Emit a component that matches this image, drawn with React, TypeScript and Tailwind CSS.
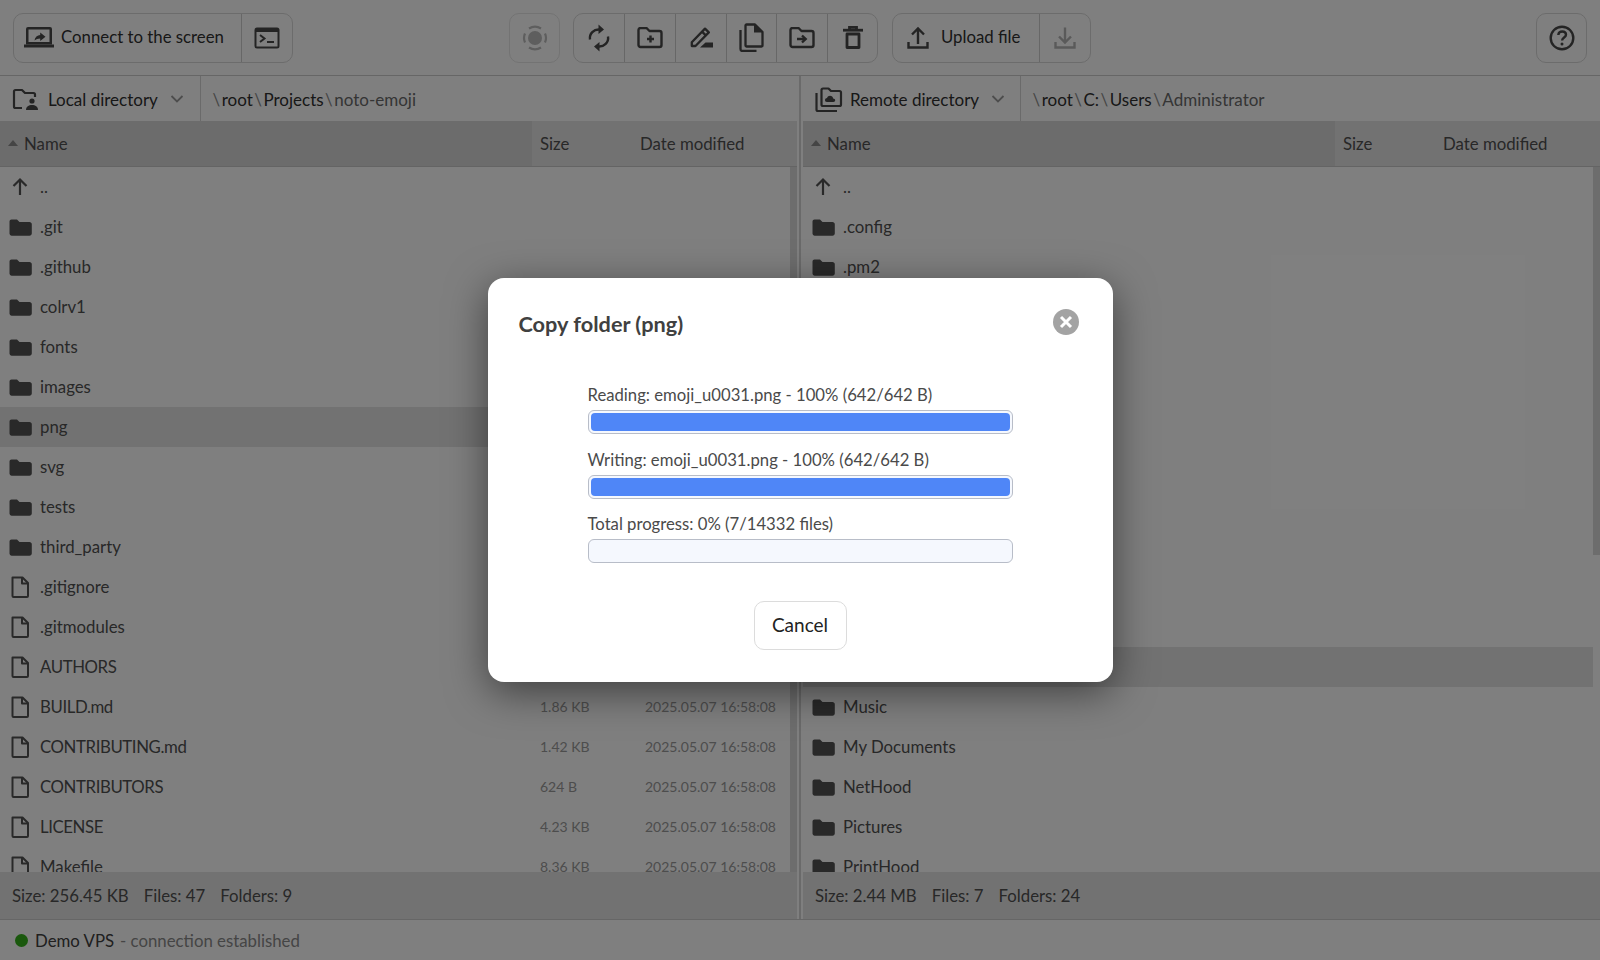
import React from "react";

const font = "font-['Lato','Noto_Sans',sans-serif]";

const FolderIcon = () => (
  <svg width="23" height="17" viewBox="0 0 23 17" fill="currentColor" className="shrink-0">
    <path d="M0.500 2.500C0.500 1.400 1.400 0.500 2.500 0.500h5.500l2.500 2.500h10C21.700 3 22.800 4 22.800 5.200v9.300c0 1.200-1 2.200-2.300 2.200H2.700C1.500 16.700 0.500 15.700 0.500 14.500z" />
  </svg>
);
const FileIcon = () => (
  <svg width="24" height="24" viewBox="0 0 24 24" fill="none" stroke="currentColor" strokeWidth="2" strokeLinejoin="round" className="shrink-0">
    <path d="M4.500 2.500h10l5.500 5.500v13a1 1 0 0 1-1 1H5.500a1 1 0 0 1-1-1z" />
    <path d="M14 2.500v6h6" />
  </svg>
);
const UpIcon = () => (
  <svg width="24" height="24" viewBox="0 0 24 24" fill="none" stroke="currentColor" strokeWidth="2.200" className="shrink-0">
    <path d="M12 20V5M5.500 11 12 4.500 18.500 11" />
  </svg>
);

const Btn = ({ children, w, border = true }: { children: React.ReactNode; w?: string; border?: boolean }) => (
  <div className={"flex h-full items-center justify-center text-[#484848] " + (w ?? "w-[51px]") + (border ? " border-r border-[#cfcfcf]" : "")}>
    {children}
  </div>
);

function Toolbar() {
  return (
    <div className="flex h-[76px] shrink-0 items-center border-b border-[#cdcdcd] bg-white px-[13px]">
      <div className="flex h-[50px] w-[280px] items-stretch rounded-[10px] border border-[#d8d8d8]">
        <div className="flex w-[228px] items-center gap-[7px] border-r border-[#cfcfcf] pl-[10px] text-[#484848]">
          <svg width="30" height="21" viewBox="0 0 30 21" fill="currentColor" className="shrink-0">
            <path fillRule="evenodd" d="M4 0h22a2 2 0 0 1 2 2v15.500H2V2a2 2 0 0 1 2-2zM4.500 2.500v12.500h21V2.500z" />
            <path d="M0 17.500h30V20.500H0z" />
            <path d="M10.500 13.500c.4-3.400 2.800-5.200 5.700-5.400V5.500l5.300 4.300-5.300 4.300v-2.600c-2.300.1-4.200.7-5.700 2z" />
          </svg>
          <span className="whitespace-nowrap pb-[2px] text-[16.800px] text-[#303030]">Connect to the screen</span>
        </div>
        <div className="flex flex-1 items-center justify-center text-[#484848]">
          <svg width="26" height="22" viewBox="0 0 26 22" className="shrink-0">
            <rect x="0.500" y="0.500" width="25" height="21" rx="2.500" fill="currentColor" />
            <rect x="2.500" y="5" width="21" height="14.500" fill="white" />
            <path d="M6 8l4.500 3.500L6 15" fill="none" stroke="currentColor" strokeWidth="2" />
            <path d="M13 15h7" stroke="currentColor" strokeWidth="2" />
          </svg>
        </div>
      </div>

      <div className="ml-[216px] flex h-[50px] w-[51px] items-center justify-center rounded-[10px] border border-[#e6e6e6] text-[#bcbcbc]">
        <svg width="26" height="26" viewBox="0 0 26 26" fill="none" stroke="currentColor" strokeWidth="2.200" className="shrink-0">
          <circle cx="13" cy="13" r="7" fill="currentColor" stroke="none" />
          <path d="M3 17.500A11 11 0 0 1 3 8.500M7 3.500a11 11 0 0 1 12 0M23 8.500a11 11 0 0 1 0 9M19 22.500a11 11 0 0 1-12 0" />
        </svg>
      </div>

      <div className="ml-[13px] flex h-[50px] w-[305px] items-stretch rounded-[10px] border border-[#d8d8d8]">
        <Btn>
          <svg width="26" height="28" viewBox="0 0 26 28" fill="none" stroke="currentColor" strokeWidth="2.400" className="shrink-0">
            <path d="M4 15.500C3 9.500 8 5 13.500 5.500" />
            <path d="M22 12.500c1 6-4 10.500-9.500 10" />
            <path d="M12.500 0.500 18 5.500l-5.500 4.500z" fill="currentColor" stroke="none" />
            <path d="M13.500 27.500 8 22.500l5.500-4.500z" fill="currentColor" stroke="none" />
          </svg>
        </Btn>
        <Btn>
          <svg width="26" height="22" viewBox="0 0 26 22" fill="none" stroke="currentColor" strokeWidth="2.400" className="shrink-0">
            <path d="M1.500 3a2 2 0 0 1 2-2h6l3 3h10a2 2 0 0 1 2 2v12a2 2 0 0 1-2 2h-19a2 2 0 0 1-2-2z" strokeLinejoin="round" />
            <path d="M13.500 8.500v7M10 12h7" />
          </svg>
        </Btn>
        <Btn>
          <svg width="23" height="21" viewBox="0 0 23 21" fill="none" stroke="currentColor" strokeWidth="2.300" className="shrink-0">
            <path d="M15 1.600 18.800 5.400 5.500 19H1.800V15.200z" strokeLinejoin="round" />
            <path d="M12 4.600l3.800 3.800" />
            <path d="M10 20.500l5.500-5H23v5z" fill="currentColor" stroke="none" />
          </svg>
        </Btn>
        <Btn w="w-[50px]">
          <svg width="25" height="29" viewBox="0 0 25 29" fill="none" stroke="currentColor" strokeWidth="2.300" strokeLinejoin="round" className="shrink-0">
            <path d="M7.500 1.500H16l7.500 7.500v13.500a1 1 0 0 1-1 1h-15a1 1 0 0 1-1-1v-20a1 1 0 0 1 1-1z" />
            <path d="M15 1v8.500h8.500z" fill="currentColor" stroke="none" />
            <path d="M1.500 7v19a2 2 0 0 0 2 2h14" />
          </svg>
        </Btn>
        <Btn>
          <svg width="26" height="22" viewBox="0 0 26 22" fill="none" stroke="currentColor" strokeWidth="2.400" className="shrink-0">
            <path d="M1.500 3a2 2 0 0 1 2-2h6l3 3h10a2 2 0 0 1 2 2v12a2 2 0 0 1-2 2h-19a2 2 0 0 1-2-2z" strokeLinejoin="round" />
            <path d="M8 12h8.500M13 8.500l3.700 3.500-3.700 3.500" />
          </svg>
        </Btn>
        <Btn border={false} w="flex-1">
          <svg width="20" height="23" viewBox="0 0 20 23" fill="none" stroke="currentColor" strokeWidth="2.800" className="shrink-0">
            <path d="M0 4.200h20" />
            <path d="M6.500 3.500V1.400h7v2.100" />
            <path d="M4 8h12v13.500H4z" strokeLinejoin="round" />
          </svg>
        </Btn>
      </div>

      <div className="ml-[14px] flex h-[50px] w-[199px] items-stretch rounded-[10px] border border-[#d8d8d8]">
        <div className="flex w-[147px] items-center gap-[12px] border-r border-[#cfcfcf] pl-[14px] text-[#484848]">
          <svg width="22" height="24" viewBox="0 0 22 24" fill="none" stroke="currentColor" strokeWidth="2.400" className="shrink-0">
            <path d="M11 18V3M5 8.500 11 2.500l6 6" />
            <path d="M1.500 16v5.500h19V16" />
          </svg>
          <span className="whitespace-nowrap pb-[2px] text-[16.800px] text-[#303030]">Upload file</span>
        </div>
        <div className="flex flex-1 items-center justify-center text-[#b4b4b4]">
          <svg width="22" height="24" viewBox="0 0 22 24" fill="none" stroke="currentColor" strokeWidth="2.400" className="shrink-0">
            <path d="M11 1.500V16M5 10.500l6 6 6-6" />
            <path d="M1.500 16v5.500h19V16" />
          </svg>
        </div>
      </div>

      <div className="ml-auto flex h-[50px] w-[51px] items-center justify-center rounded-[10px] border border-[#d8d8d8] text-[#484848]">
        <svg width="26" height="26" viewBox="0 0 26 26" fill="none" stroke="currentColor" strokeWidth="2.400" className="shrink-0">
          <circle cx="13" cy="13" r="11.300" />
          <path d="M9.300 10c.2-2.200 1.800-3.500 3.900-3.500 2.200 0 3.800 1.400 3.800 3.300 0 2.700-3.900 2.800-3.900 5.700" />
          <circle cx="13" cy="19" r="1.500" fill="currentColor" stroke="none" />
        </svg>
      </div>
    </div>
  );
}

type Row = { name: string; type: "up" | "folder" | "file"; size?: string; selected?: boolean };
const date = "2025.05.07 16:58:08";

const leftRows: Row[] = [
  { name: "..", type: "up" },
  { name: ".git", type: "folder" },
  { name: ".github", type: "folder" },
  { name: "colrv1", type: "folder" },
  { name: "fonts", type: "folder" },
  { name: "images", type: "folder" },
  { name: "png", type: "folder", selected: true },
  { name: "svg", type: "folder" },
  { name: "tests", type: "folder" },
  { name: "third_party", type: "folder" },
  { name: ".gitignore", type: "file", size: "74 B" },
  { name: ".gitmodules", type: "file", size: "102 B" },
  { name: "AUTHORS", type: "file", size: "318 B" },
  { name: "BUILD.md", type: "file", size: "1.86 KB" },
  { name: "CONTRIBUTING.md", type: "file", size: "1.42 KB" },
  { name: "CONTRIBUTORS", type: "file", size: "624 B" },
  { name: "LICENSE", type: "file", size: "4.23 KB" },
  { name: "Makefile", type: "file", size: "8.36 KB" },
];
const rightRows: Row[] = [
  { name: "..", type: "up" },
  ...[".config", ".pm2", "AppData", "Application Data", "Contacts", "Cookies", "Desktop", "Documents", "Downloads", "Favorites", "Links"].map((name) => ({ name, type: "folder" as const })),
  { name: "Local Settings", type: "folder", selected: true },
  ...["Music", "My Documents", "NetHood", "Pictures", "PrintHood"].map((name) => ({ name, type: "folder" as const })),
];

function Pane({
  label,
  icon,
  labelW,
  labelGap,
  path,
  last,
  rows,
  thumbH,
  status,
}: {
  label: string;
  icon: React.ReactNode;
  labelW: string;
  labelGap: string;
  path: string[];
  last: string;
  rows: Row[];
  thumbH: string;
  status: string[];
}) {
  return (
    <div className="flex min-w-0 flex-1 flex-col">
      <div className="flex h-[45px] shrink-0 items-stretch">
        <div className={"flex items-center border-r border-[#d4d4d4] pl-[12px] text-[#484848] " + labelW}>
          {icon}
          <span className={"whitespace-nowrap pt-[2px] text-[17px] text-[#303030] " + labelGap}>{label}</span>
          <svg width="14" height="10" viewBox="0 0 14 10" fill="none" stroke="#9a9a9a" strokeWidth="1.800" className="ml-[12px] shrink-0">
            <path d="M1.500 2 7 7.500 12.500 2" />
          </svg>
        </div>
        <div className="flex items-center whitespace-nowrap pl-[10px] pt-[2px] text-[17px]">
          {path.map((p) => (
            <React.Fragment key={p}>
              <span className="mx-[1.500px] text-[#8a8a8a]">\</span>
              <span className="text-[#303030]">{p}</span>
            </React.Fragment>
          ))}
          <span className="mx-[1.500px] text-[#8a8a8a]">\</span>
          <span className="text-[#6a6a6a]">{last}</span>
        </div>
      </div>

      <div className="flex h-[46px] shrink-0 items-center border-b border-[#c8c8c8] bg-[#e5e5e5] text-[16.800px] text-[#505050]">
        <div className="flex h-full w-[532px] items-center bg-[#d8d8d8] pl-[8px]">
          <svg width="10" height="6" viewBox="0 0 10 6" fill="#8a8a8a" className="mb-[1px] shrink-0">
            <path d="M5 0l5 6H0z" />
          </svg>
          <span className="ml-[6px]">Name</span>
        </div>
        <span className="ml-[8px] w-[100px]">Size</span>
        <span>Date modified</span>
      </div>

      <div className="relative min-h-0 flex-1 overflow-hidden pr-[7px]">
        <div className={"absolute right-0 top-0 w-[7px] bg-[#dadada] " + thumbH} />
        {rows.map((r) => (
          <div key={r.name} className={"flex h-[40px] items-center text-[16.800px] text-[#505050] " + (r.selected ? "bg-[#e4e4e4]" : "")}>
            <div className="ml-[8px] flex w-[24px] shrink-0 justify-center text-[#525252]">
              {r.type === "up" ? <UpIcon /> : r.type === "folder" ? <FolderIcon /> : <FileIcon />}
            </div>
            <span className={"ml-[8px] whitespace-nowrap " + (/^[A-Z]{3}/.test(r.name) ? "tracking-[-0.4px]" : "")}>{r.name}</span>
            {r.size && (
              <div className="absolute left-[540px] flex pb-[2px] text-[14px] text-[#9a9a9a]">
                <span className="w-[105px]">{r.size}</span>
                <span>{date}</span>
              </div>
            )}
          </div>
        ))}
      </div>

      <div className="flex h-[47px] shrink-0 items-center gap-[15px] bg-[#e5e5e5] pl-[12px] text-[16.800px] text-[#505050]">
        {status.map((s) => (
          <span key={s}>{s}</span>
        ))}
      </div>
    </div>
  );
}

function Progress({ label, value, className = "" }: { label: string; value: number; className?: string }) {
  return (
    <div className={className}>
      <div className="h-[23px] text-[16.700px] leading-[22px] text-[#4a4a4a]">{label}</div>
      <div className="mt-[3px] h-[24px] rounded-[6px] border border-[#b8bdc8] bg-[#f5f8fe] p-[2px]">
        {value > 0 && <div className="h-full rounded-[4px] bg-[#4f86f7]" style={{ width: value + "%" }} />}
      </div>
    </div>
  );
}

export default function App() {
  return (
    <div className={"relative flex h-[960px] w-[1600px] flex-col overflow-hidden bg-white " + font}>
      <Toolbar />
      <div className="flex min-h-0 flex-1">
        <div className="flex w-[797px] min-w-0">
          <Pane
            label="Local directory"
            labelW="w-[201px]"
            labelGap="ml-[10px]"
            icon={
              <svg width="26" height="24" viewBox="0 0 26 24" fill="none" stroke="currentColor" strokeWidth="2.200" className="shrink-0">
                <path d="M10 21H3.500a1.500 1.500 0 0 1-1.500-1.500V4.500A1.500 1.500 0 0 1 3.500 3H10l3 3h8.500A1.500 1.500 0 0 1 23 7.500V10" strokeLinejoin="round" />
                <circle cx="20" cy="14" r="2.600" fill="currentColor" stroke="none" />
                <path d="M14 23c0-3.300 2.700-5 6-5s6 1.700 6 5z" fill="currentColor" stroke="none" />
              </svg>
            }
            path={["root", "Projects"]}
            last="noto-emoji"
            rows={leftRows}
            thumbH="h-full"
            status={["Size: 256.45 KB", "Files: 47", "Folders: 9"]}
          />
        </div>
        <div className="flex w-[6px] shrink-0 bg-white">
          <div className="mx-[2px] h-full w-[2px] bg-[#d4d4d4]" />
        </div>
        <div className="flex min-w-0 flex-1">
          <Pane
            label="Remote directory"
            labelW="w-[218px]"
            labelGap="ml-[7px]"
            icon={
              <svg width="28" height="28" viewBox="0 0 28 28" fill="none" stroke="currentColor" strokeWidth="2.200" className="shrink-0">
                <path d="M1.500 8v16.500a1.500 1.500 0 0 0 1.500 1.500h19" />
                <path d="M6.500 5a1.500 1.500 0 0 1 1.500-1.500h5.500l2.500 2.500h8.500a1.500 1.500 0 0 1 1.500 1.500v12a1.500 1.500 0 0 1-1.500 1.500H8a1.500 1.500 0 0 1-1.500-1.500z" strokeLinejoin="round" />
                <path d="M12 17c-1.500 0-2-1-2-2 0-1.200 1-2 2-2 .5-1.500 1.700-2.200 3-2.200 1.700 0 3 1.200 3.200 2.700 1.100 0 2 .8 2 1.800s-.8 1.700-1.800 1.700z" fill="currentColor" stroke="none" />
              </svg>
            }
            path={["root", "C:", "Users"]}
            last="Administrator"
            rows={rightRows}
            thumbH="h-[388px]"
            status={["Size: 2.44 MB", "Files: 7", "Folders: 24"]}
          />
        </div>
      </div>
      <div className="flex h-[41px] shrink-0 items-center border-t border-[#cdcdcd] bg-white pl-[15px] text-[16.800px]">
        <span className="h-[13px] w-[13px] rounded-full bg-[#34b01a]" />
        <span className="ml-[7px] pt-[1px] text-[#404040]">Demo VPS</span>
        <span className="ml-[6px] pt-[1px] text-[#8a8a8a]">- connection established</span>
      </div>

      <div className="absolute inset-0 flex items-start justify-center bg-black/50 pt-[278px]">
        <div className="relative h-[404px] w-[625px] rounded-[16px] bg-white px-[31px] pt-[30px] shadow-[0_10px_40px_rgba(0,0,0,0.5)]">
          <div className="text-[21.700px] leading-[32px] font-bold text-[#404040]">Copy folder (png)</div>
          <div className="absolute right-[34px] top-[31px] flex h-[26px] w-[26px] items-center justify-center rounded-full bg-[#a3a3a3]">
            <svg width="14" height="14" viewBox="0 0 14 14" stroke="white" strokeWidth="3" className="shrink-0">
              <path d="M2 2l10 10M12 2 2 12" />
            </svg>
          </div>
          <div className="mx-auto mt-[44px] w-[425px]">
            <Progress label="Reading: emoji_u0031.png - 100% (642/642 B)" value={100} />
            <Progress label="Writing: emoji_u0031.png - 100% (642/642 B)" value={100} className="mt-[14.500px]" />
            <Progress label="Total progress: 0% (7/14332 files)" value={0} className="mt-[14.500px]" />
          </div>
          <div className="mt-[38px] flex justify-center">
            <div className="flex h-[49px] w-[93px] items-center justify-center rounded-[10px] border border-[#dcdcdc] text-[19px] text-[#222]">Cancel</div>
          </div>
        </div>
      </div>
    </div>
  );
}
